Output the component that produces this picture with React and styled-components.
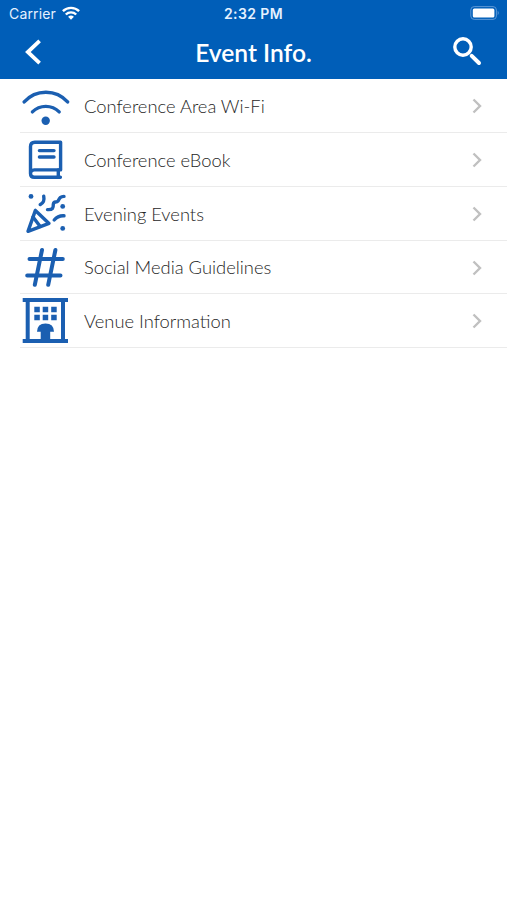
import styled, { createGlobalStyle } from 'styled-components'

const App = () => {
  return (
    <Screen>
      <GlobalStyle />
      <Header>
        <StatusBar>
          <Carrier>
            Carrier
            <SignalIcon />
          </Carrier>
          <Time>2:32 PM</Time>
          <BatteryIcon />
        </StatusBar>
        <NavBar>
          <NavButton aria-label="Back">
            <BackIcon />
          </NavButton>
          <Title>Event Info.</Title>
          <NavButton $end aria-label="Search">
            <SearchIcon />
          </NavButton>
        </NavBar>
      </Header>
      <List>
        {items.map(({ label, icon }) => (
          <Row key={label}>
            <RowIcon viewBox="0 0 50 53">{icon}</RowIcon>
            <Label>{label}</Label>
            <Chevron viewBox="0 0 10 16">
              <path d="M1.5 1.5L8 8L1.5 14.5" />
            </Chevron>
          </Row>
        ))}
      </List>
    </Screen>
  );
};

export default App;

const SignalIcon = () => (
  <svg width="18" height="14" viewBox="0 0 18 14" fill="none" stroke="#fff" strokeWidth="2.4">
    <path d="M.9 5.2A11.6 11.6 0 0 1 17.1 5.2" />
    <path d="M3.8 8.5A7.5 7.5 0 0 1 14.2 8.5" />
    <path d="M9 13.8L6.1 10.8A4.2 4.2 0 0 1 11.9 10.8Z" fill="#fff" stroke="none" />
  </svg>
);

const BatteryIcon = () => (
  <svg width="31" height="14" viewBox="0 0 31 14">
    <rect x="1.8" y=".6" width="25.6" height="12.8" rx="3.4" fill="none" stroke="#5b97d6" strokeWidth="1" />
    <rect x="3.8" y="2.5" width="21.6" height="9" rx="1.5" fill="#fff" />
    <path d="M28.7 4.8Q30.8 7 28.7 9.2Z" fill="#5b97d6" />
  </svg>
);

const BackIcon = () => (
  <svg width="17" height="26" viewBox="0 0 17 26" fill="none" stroke="#fff" strokeWidth="3.8">
    <path d="M14.6 1.8L2.8 13L14.6 24.2" />
  </svg>
);

const SearchIcon = () => (
  <svg width="30" height="30" viewBox="0 0 30 30" fill="none" stroke="#fff">
    <circle cx="10" cy="10" r="8.2" strokeWidth="3.4" />
    <path d="M18.7 18.8L26 26" strokeWidth="4" strokeLinecap="round" />
  </svg>
);

const items = [
  {
    label: 'Conference Area Wi-Fi',
    icon: (
      <>
        <path d="M4.2 22.9A29.1 29.1 0 0 1 47.6 22.9" />
        <path d="M12.4 32.9A18.9 18.9 0 0 1 39.2 32.9" />
        <circle className="solid" cx="25.7" cy="41.7" r="4.2" />
      </>
    ),
  },
  {
    label: 'Conference eBook',
    icon: (
      <>
        <path d="M10.5 40.5V13.5Q10.5 9.2 14.8 9.2H40.6V36.9H14.3Q10.5 37 10.5 40.5Q10.5 44.3 14.3 44.3H40.4" />
        <path d="M38.3 37V44M19.4 17.6H34M19.4 24H34" />
      </>
    ),
  },
  {
    label: 'Evening Events',
    icon: (
      <>
        <path d="M15.4 23.4L8 44.4L29 36.4Z" />
        <path d="M13 30L20.2 39.5" />
        <path d="M23.7 9.2Q25 15.6 20.2 17.6" />
        <path d="M27.5 22.6C33 23 33.4 20.6 33.3 17.2C34 13.6 36 16.2 38.2 13.8C39.6 11 40.5 9.4 44 9.4" />
        <path d="M34.2 33Q38 28.4 44 28.8" />
        <circle className="solid" cx="11" cy="9.4" r="2.4" />
        <circle className="solid" cx="42.7" cy="19.4" r="2.4" />
        <circle className="solid" cx="42.7" cy="41.4" r="2.4" />
      </>
    ),
  },
  {
    label: 'Social Media Guidelines',
    icon: (
      <path strokeWidth="4" d="M22 9L14.8 43.8M35.4 9L28.2 43.8M9.5 17.9H42.8M7.2 34.5H40.5" />
    ),
  },
  {
    label: 'Venue Information',
    icon: (
      <g className="solid">
        <path d="M2.7 4.1H48V8.1H45V45.1H48V49.1H2.7V45.1H5.7V8.1H2.7ZM9.7 8.1V45.1H20.7V37.8H17Q17.2 29.5 25.5 29.5T34 37.8H30.2V45.1H41V8.1Z" />
        <path d="M14.3 12.8h5.5v5.4h-5.5zM22.7 12.8h5.5v5.4h-5.5zM31.2 12.8h5.5v5.4h-5.5zM14.3 20.8h5.5v5.4h-5.5zM22.7 20.8h5.5v5.4h-5.5zM31.2 20.8h5.5v5.4h-5.5z" />
      </g>
    ),
  },
];

const GlobalStyle = createGlobalStyle`
  body {
    margin: 0;
    background: #fff;
  }
`;

const Screen = styled.div`
  min-height: 900px;
  background: #fff;
  font-family: Lato, sans-serif;
`;

const Header = styled.header`
  box-sizing: border-box;
  height: 79.3px;
  background: #005eb8;
  color: #fff;
`;

const StatusBar = styled.div`
  display: grid;
  grid-template-columns: 1fr auto 1fr;
  align-items: center;
  height: 26px;
  padding: 0 7px 0 9px;
  font-family: Inter, sans-serif;
  font-size: 14px;
  color: #e6f1ff;

  > svg {
    justify-self: end;
  }
`;

const Carrier = styled.div`
  display: flex;
  align-items: center;
  gap: 6px;
  letter-spacing: 0.15px;
`;

const Time = styled.div`
  font-weight: 600;
  letter-spacing: 0.4px;
  margin-right: 2px;
`;

const NavBar = styled.nav`
  display: grid;
  grid-template-columns: 60px 1fr 60px;
  align-items: center;
  height: 52px;
`;

const NavButton = styled.button`
  display: flex;
  justify-content: ${({ $end }) => ($end ? 'flex-end' : 'flex-start')};
  padding: ${({ $end }) => ($end ? '0 24px 0 0' : '0 0 0 25px')};
  border: none;
  background: none;
`;

const Title = styled.h1`
  margin: 2px 0 0;
  text-align: center;
  font-size: 24.6px;
  line-height: 30px;
  font-weight: 600;
`;

const List = styled.ul`
  margin: 0;
  padding: 0 0 0 20px;
  list-style: none;
`;

const Row = styled.li`
  box-sizing: border-box;
  display: flex;
  align-items: center;
  height: 53.8px;
  padding-right: 25px;
  border-bottom: 1px solid #ebebeb;
`;

const RowIcon = styled.svg`
  flex: none;
  width: 50px;
  height: 53px;
  margin-right: 14px;
  fill: none;
  stroke: #1b5fb1;
  stroke-width: 3.4;
  stroke-linecap: round;
  stroke-linejoin: round;

  .solid {
    fill: #1b5fb1;
    stroke: none;
  }
`;

const Label = styled.span`
  flex: 1;
  padding-top: 0.6px;
  color: #262626;
  font-size: 18.35px;
  font-weight: 300;
`;

const Chevron = styled.svg`
  width: 10px;
  height: 16px;
  margin-top: 1px;
  fill: none;
  stroke: #c0c0c0;
  stroke-width: 2.4;
`;
